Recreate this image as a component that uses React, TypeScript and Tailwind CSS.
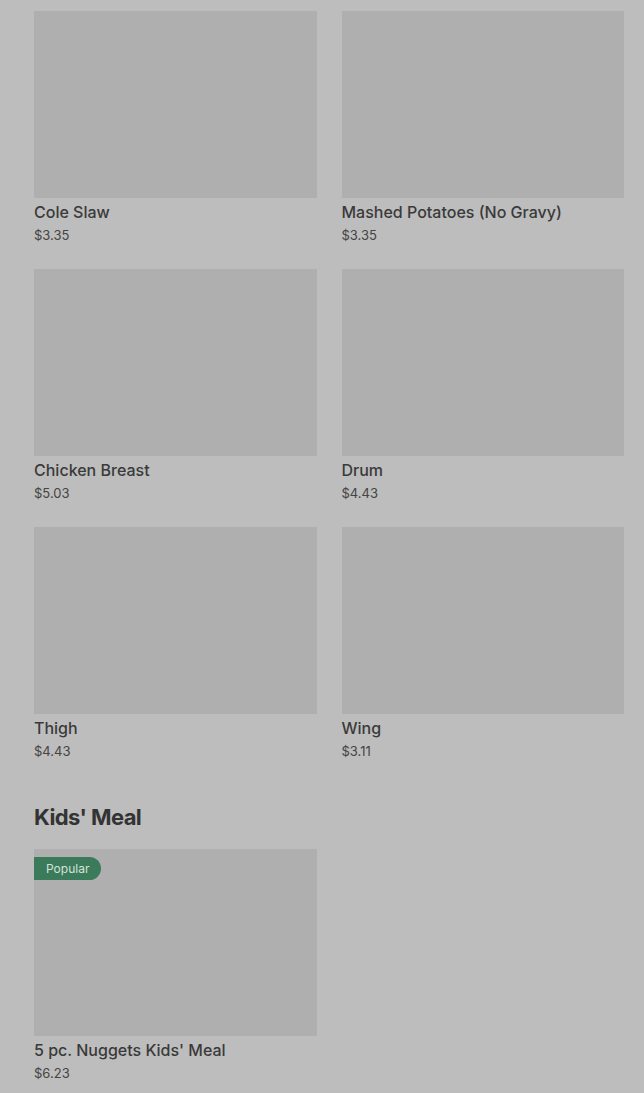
const items = [
  { name: 'Cole Slaw', price: '$3.35' },
  { name: 'Mashed Potatoes (No Gravy)', price: '$3.35' },
  { name: 'Chicken Breast', price: '$5.03' },
  { name: 'Drum', price: '$4.43' },
  { name: 'Thigh', price: '$4.43' },
  { name: 'Wing', price: '$3.11' },
];

function ItemCard({ name, price, popular }: { name: string; price: string; popular?: boolean }) {
  return (
    <div className="flex flex-col">
      <div className="relative h-[187px] bg-[#afafaf]">
        {popular && (
          <span className="absolute left-0 top-[8px] h-[23px] rounded-r-full bg-[#3b7a5b] pl-[12px] pr-[12px] text-[12px] leading-[23px] text-[#d3e3d8]">
            Popular
          </span>
        )}
      </div>
      <div className="mt-[4px] text-[16px] leading-[20px] font-medium text-[#3a3a3a]">{name}</div>
      <div className="mt-[3px] text-[13px] leading-[20px] text-[#444]">{price}</div>
    </div>
  );
}

export default function App() {
  return (
    <div
      className="min-h-[1093px] bg-[#bdbdbd] pl-[34px] pr-[20px] pt-[11px]"
      style={{ fontFamily: 'Inter, "Noto Sans", sans-serif' }}
    >
      <div className="grid grid-cols-2 gap-x-[25px] gap-y-[24px]">
        {items.map((item) => (
          <ItemCard key={item.name} name={item.name} price={item.price} />
        ))}
      </div>
      <h2 className="mt-[40px] text-[22px] leading-[32px] font-bold tracking-[-0.6px] text-[#333]">Kids' Meal</h2>
      <div className="mt-[16px] grid grid-cols-2 gap-x-[25px]">
        <ItemCard name="5 pc. Nuggets Kids' Meal" price="$6.23" popular />
      </div>
    </div>
  );
}
